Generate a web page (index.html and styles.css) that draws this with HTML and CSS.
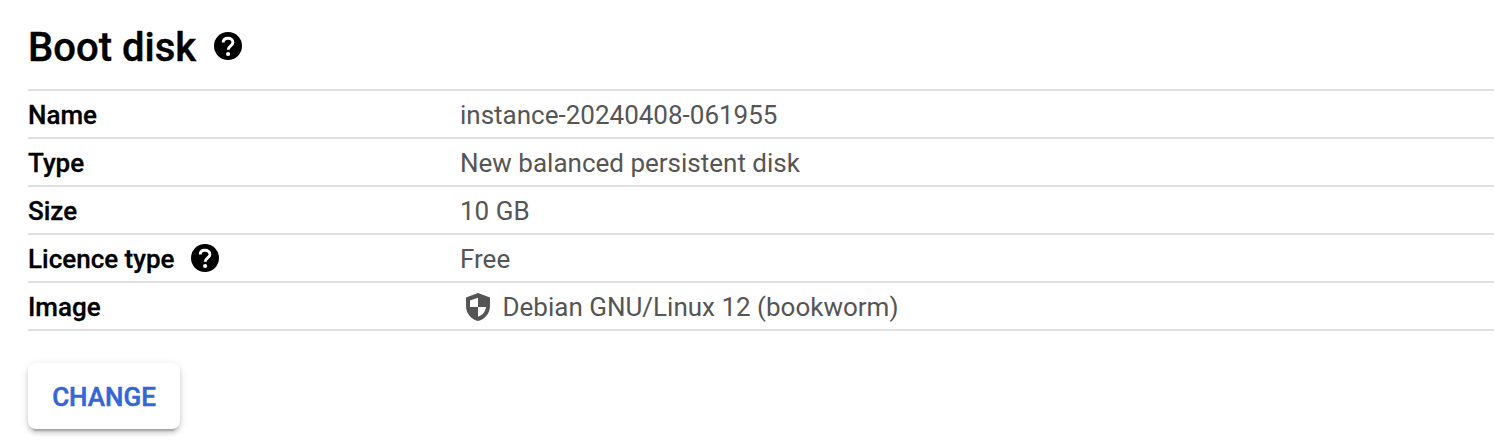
FILE: index.html
```html
<!DOCTYPE html>
<html lang="en-GB">
<head>
<meta charset="utf-8">
<title>Boot disk</title>
<link rel="stylesheet" href="styles.css">
</head>
<body>
<main class="boot-disk">
  <header class="heading">
    <h1>Boot disk</h1>
    <svg class="help" viewBox="0 0 28 28" aria-hidden="true"><circle cx="14" cy="14" r="14"/><path class="mark" d="M9.200 10.500C9.200 7.800 11.300 6.300 14 6.300s4.900 1.600 4.900 4.200c0 3.300-4.700 3.600-4.700 7.300"/><circle class="dot" cx="14.100" cy="22" r="2.100"/></svg>
  </header>
  <dl class="details">
    <div class="row"><dt>Name</dt><dd>instance-20240408-061955</dd></div>
    <div class="row"><dt>Type</dt><dd>New balanced persistent disk</dd></div>
    <div class="row"><dt>Size</dt><dd>10 GB</dd></div>
    <div class="row"><dt>Licence type <svg class="help" viewBox="0 0 28 28" aria-hidden="true"><circle cx="14" cy="14" r="14"/><path class="mark" d="M9.200 10.500C9.200 7.800 11.300 6.300 14 6.300s4.900 1.600 4.900 4.200c0 3.300-4.700 3.600-4.700 7.300"/><circle class="dot" cx="14.100" cy="22" r="2.100"/></svg></dt><dd>Free</dd></div>
    <div class="row"><dt>Image</dt><dd><svg class="shield" viewBox="0 0 24 28" aria-hidden="true"><path fill-rule="evenodd" d="M12 0 0 4.500V13c0 7.300 5 13.300 12 15 7-1.700 12-7.700 12-15V4.500zM12 4.700V14H4V7.600zM12 14h8c-.5 4.500-3.400 8.200-8 9.800z"/></svg>Debian GNU/Linux 12 (bookworm)</dd></div>
  </dl>
  <button class="change" type="button">CHANGE</button>
</main>
</body>
</html>
```
FILE: styles.css
```css
body {
  margin: 0;
  background: #fff;
  color: #000;
  font-family: Roboto, sans-serif;
}

.boot-disk {
  box-sizing: border-box;
  min-height: 446px;
  padding: 20px 16px 0 28px;
}

.heading {
  display: flex;
  align-items: center;
  gap: 18px;
  height: 52px;
}

h1 {
  margin: 0;
  padding-top: 4px;
  font-size: 40px;
  font-weight: 500;
  line-height: 52px;
  -webkit-text-stroke: .4px;
}

.help {
  width: 28px;
  height: 28px;
}

.mark {
  fill: none;
  stroke: #fff;
  stroke-width: 2.9;
}

.dot {
  fill: #fff;
}

.details {
  margin: 17px 0 32px;
  border-top: 2px solid #e0e0e0;
}

.row {
  display: flex;
  box-sizing: border-box;
  height: 48px;
  border-bottom: 2px solid #e0e0e0;
  font-size: 26px;
  line-height: 48px;
}

dt {
  display: flex;
  align-items: center;
  gap: 16px;
  width: 432px;
  padding-top: 2px;
  font-weight: 500;
  -webkit-text-stroke: .3px;
}

dt .help {
  margin-top: -2px;
}

dd {
  display: flex;
  align-items: center;
  margin: 0;
  padding-top: 2px;
  color: #555;
}

.shield {
  width: 24px;
  height: 28px;
  margin: 0 12.5px 0 6px;
  fill: #555;
}

.change {
  width: 152px;
  height: 66px;
  padding: 2px 0 0;
  border: 0;
  border-radius: 8px;
  background: #fff;
  box-shadow: 0 6px 2px -4px rgba(0, 0, 0, .2), 0 4px 4px rgba(0, 0, 0, .14), 0 2px 10px rgba(0, 0, 0, .12);
  color: #3367d6;
  font: 500 26px/64px Roboto, sans-serif;
  -webkit-text-stroke: .5px;
}
```
